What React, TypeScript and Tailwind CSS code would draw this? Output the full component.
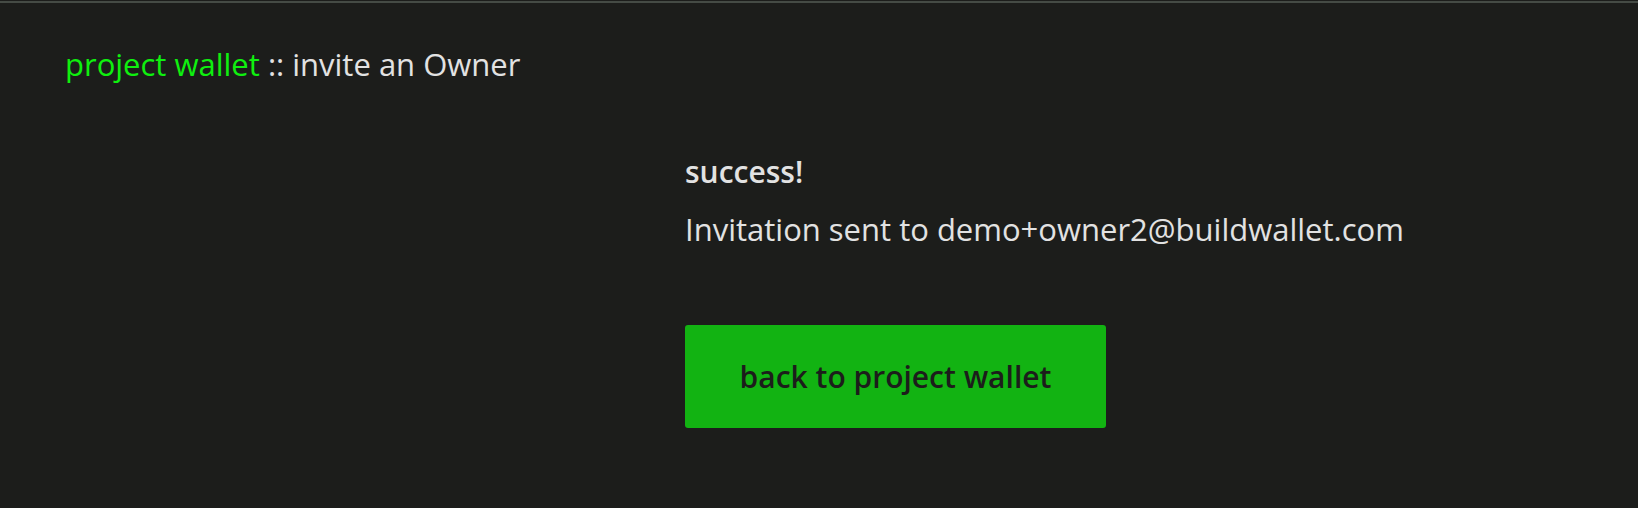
import React from 'react';

const App: React.FC = () => {
  return (
    <div className="min-h-[508px] bg-[#1c1d1b] font-['Open_Sans',_'Lato',_sans-serif] text-[#e2e2e2]">
      <div className="pt-px">
        <div className="h-[2px] bg-[#454b45]" />
      </div>

      <div className="pl-[65px] pt-[43px] text-[31px] leading-[36px]">
        <span className="text-[#0ff00f]">project wallet</span>
        <span> :: invite an Owner</span>
      </div>

      <div className="pl-[685px] pt-[72px]">
        <h2 className="text-[30px] font-semibold leading-[36px]">success!</h2>
        <p className="mt-[21px] text-[31px] leading-[36px]">Invitation sent to demo+owner2@buildwallet.com</p>

        <button className="mt-[78px] flex h-[103px] w-[421px] items-center justify-center rounded-[3px] bg-[#12b312] text-[30px] font-semibold text-[#1c1d1b]">
          back to project wallet
        </button>
      </div>
    </div>
  );
};

export default App;
